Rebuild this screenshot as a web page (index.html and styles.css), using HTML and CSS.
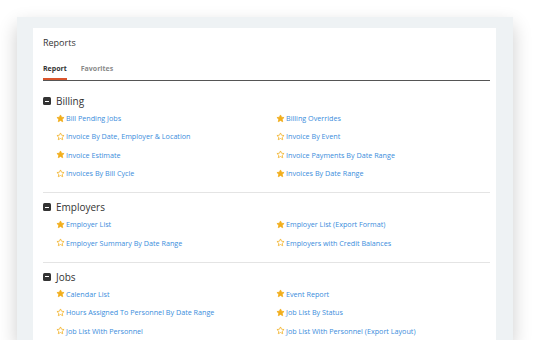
FILE: index.html
```html
<!DOCTYPE html>
<html lang="en">
<head>
    <meta charset="UTF-8">
    <meta name="viewport" content="width=device-width, initial-scale=1.0">
    <title>Reports</title>
    <link rel="stylesheet" href="styles.css">
</head>
<body>
    <svg width="0" height="0" class="defs">
        <symbol id="star" viewBox="0 0 24 24">
            <path d="M12 2.5l2.9 6.1 6.6.8-4.9 4.6 1.3 6.6L12 17.3l-5.9 3.3 1.3-6.6-4.9-4.6 6.6-.8z"/>
        </symbol>
    </svg>

    <div class="frame">
        <div class="card">
            <h1 class="title">Reports</h1>

            <div class="tabs">
                <span class="tab active">Report</span>
                <span class="tab">Favorites</span>
            </div>

            <div class="section">
                <h2 class="section-title"><span class="toggle"></span>Billing</h2>
                <ul class="list">
                    <li><svg class="star fav"><use href="#star"/></svg><a href="#">Bill Pending Jobs</a></li>
                    <li><svg class="star fav"><use href="#star"/></svg><a href="#">Billing Overrides</a></li>
                    <li><svg class="star"><use href="#star"/></svg><a href="#">Invoice By Date, Employer &amp; Location</a></li>
                    <li><svg class="star"><use href="#star"/></svg><a href="#">Invoice By Event</a></li>
                    <li><svg class="star fav"><use href="#star"/></svg><a href="#">Invoice Estimate</a></li>
                    <li><svg class="star"><use href="#star"/></svg><a href="#">Invoice Payments By Date Range</a></li>
                    <li><svg class="star"><use href="#star"/></svg><a href="#">Invoices By Bill Cycle</a></li>
                    <li><svg class="star fav"><use href="#star"/></svg><a href="#">Invoices By Date Range</a></li>
                </ul>
            </div>

            <div class="section">
                <h2 class="section-title"><span class="toggle"></span>Employers</h2>
                <ul class="list">
                    <li><svg class="star fav"><use href="#star"/></svg><a href="#">Employer List</a></li>
                    <li><svg class="star fav"><use href="#star"/></svg><a href="#">Employer List (Export Format)</a></li>
                    <li><svg class="star"><use href="#star"/></svg><a href="#">Employer Summary By Date Range</a></li>
                    <li><svg class="star"><use href="#star"/></svg><a href="#">Employers with Credit Balances</a></li>
                </ul>
            </div>

            <div class="section">
                <h2 class="section-title"><span class="toggle"></span>Jobs</h2>
                <ul class="list">
                    <li><svg class="star fav"><use href="#star"/></svg><a href="#">Calendar List</a></li>
                    <li><svg class="star fav"><use href="#star"/></svg><a href="#">Event Report</a></li>
                    <li><svg class="star"><use href="#star"/></svg><a href="#">Hours Assigned To Personnel By Date Range</a></li>
                    <li><svg class="star fav"><use href="#star"/></svg><a href="#">Job List By Status</a></li>
                    <li><svg class="star"><use href="#star"/></svg><a href="#">Job List With Personnel</a></li>
                    <li><svg class="star"><use href="#star"/></svg><a href="#">Job List With Personnel (Export Layout)</a></li>
                </ul>
            </div>
        </div>
    </div>
</body>
</html>
```

FILE: styles.css
```css
body {
    margin: 0;
    background: #fff;
    font-family: "Open Sans", "Noto Sans", sans-serif;
}
.defs {
    position: absolute;
}
.frame {
    margin: 17px 0 0 17px;
    width: 496px;
    height: 323px;
    box-sizing: border-box;
    padding: 11px 17px 0 16px;
    background-color: #eef2f4;
    box-shadow: 0 8px 18px rgba(0, 0, 0, 0.2);
    overflow: hidden;
}
.card {
    background-color: #fff;
    height: 100%;
    padding: 9px 6px 0 10px;
    box-sizing: border-box;
}
.title {
    margin: 0;
    font-size: 9px;
    font-weight: normal;
    color: #333;
    line-height: 12px;
}
.tabs {
    display: flex;
    gap: 14px;
    margin-top: 15px;
    border-bottom: 1.5px solid #555;
}
.tab {
    font-size: 7px;
    font-weight: bold;
    color: #8a8a8a;
    padding-bottom: 7px;
}
.tab.active {
    color: #333;
    box-shadow: inset 0 -2px 0 #d9532b;
}
.section {
    border-bottom: 1px solid #e4e4e4;
    padding: 13px 0 10px;
}
.section + .section {
    padding-top: 7px;
    padding-bottom: 10px;
}
.section-title {
    display: flex;
    align-items: center;
    gap: 5px;
    margin: 0;
    font-size: 10px;
    font-weight: normal;
    color: #333;
    line-height: 14px;
}
.toggle {
    width: 8px;
    height: 8px;
    border-radius: 1.5px;
    background-color: #333;
    position: relative;
}
.toggle::after {
    content: "";
    position: absolute;
    left: 2px;
    right: 2px;
    top: 3.5px;
    height: 1px;
    background: #fff;
}
.list {
    list-style: none;
    margin: 1px 0 0;
    padding: 0 0 0 13px;
    display: grid;
    grid-template-columns: 220px 1fr;
}
.list li {
    display: flex;
    align-items: center;
    gap: 1px;
    height: 18.3px;
}
.list a {
    font-size: 7.2px;
    color: #3a8ddc;
    text-decoration: none;
}
.star {
    width: 9px;
    height: 9px;
    fill: none;
    stroke: #f2ae1c;
    stroke-width: 2;
}
.star.fav {
    fill: #f2ae1c;
}
```
